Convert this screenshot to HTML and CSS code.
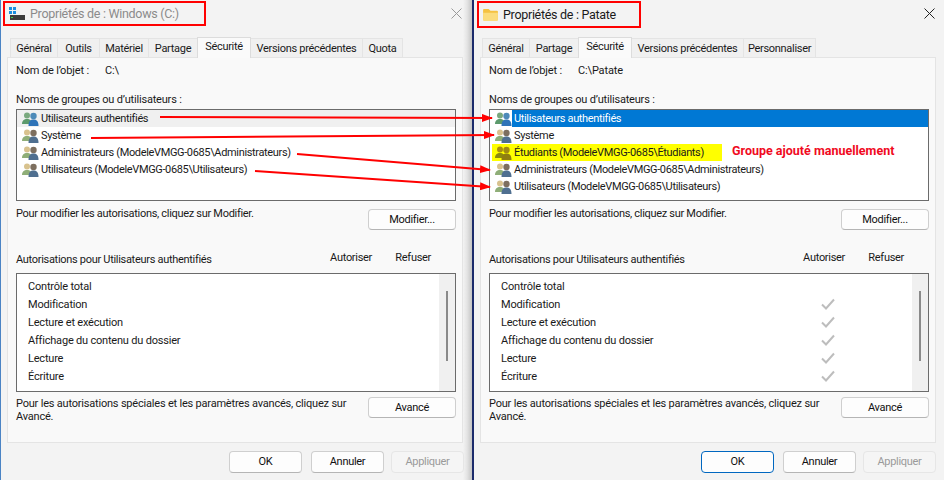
FILE: index.html
```html
<!DOCTYPE html>
<html lang="fr">
<head>
<meta charset="utf-8">
<title>Propriétés</title>
<link rel="stylesheet" href="styles.css">
</head>
<body>
<svg class="defs" width="0" height="0" aria-hidden="true">
  <defs>
    <symbol id="users" viewBox="0 0 17 14">
      <circle cx="5" cy="3.500" r="3" class="back"/>
      <path d="M0 12c0-3.500 2-5 5-5s5 1.500 5 5z" class="backb"/>
      <circle cx="11.500" cy="4" r="3.200" class="front"/>
      <path d="M6.500 14c0-5 2-6.500 5-6.500s5 1.500 5 6.500z" class="frontb"/>
    </symbol>
    <symbol id="check" viewBox="0 0 14 12">
      <path d="M1 6.500l4 4L13 1.500" fill="none" stroke="#bdbdbd" stroke-width="2"/>
    </symbol>
    <marker id="head" markerWidth="11" markerHeight="8" refX="10" refY="4" orient="auto" markerUnits="userSpaceOnUse">
      <path d="M0 0L11 4L0 8z" fill="#f00"/>
    </marker>
  </defs>
</svg>

<main class="desk">
  <section class="win win-inactive">
    <header class="titlebar">
      <div class="title-box title-box-a">
        <svg class="drive" viewBox="0 0 16 14" width="16" height="14"><rect x="0" y="0" width="3" height="3" fill="#1b8fe0"/><rect x="4" y="0" width="3" height="3" fill="#1b8fe0"/><rect x="0" y="4" width="3" height="3" fill="#1b8fe0"/><rect x="4" y="4" width="3" height="3" fill="#1b8fe0"/><rect x="1" y="8" width="15" height="5" fill="#3c3c3c"/><rect x="2" y="10" width="2" height="1" fill="#3fd04f"/></svg>
        <span class="title-text">Propriétés de : Windows (C:)</span>
      </div>
      <svg class="close" viewBox="0 0 11 11" width="11" height="11"><path d="M.5.500l10 10M10.500.500l-10 10" stroke="currentColor" fill="none"/></svg>
    </header>
    <nav class="tabs">
      <span class="tab t-gen">Général</span><span class="tab t-out">Outils</span><span class="tab t-mat">Matériel</span><span class="tab t-par">Partage</span><span class="tab tab-on t-sec">Sécurité</span><span class="tab t-ver">Versions précédentes</span><span class="tab t-quo">Quota</span>
    </nav>
    <div class="panel">
      <div class="objet"><span class="objet-label">Nom de l’objet :</span><span>C:\</span></div>
      <div class="groups-label">Noms de groupes ou d’utilisateurs :</div>
      <ul class="list">
        <li class="row row-hover"><svg class="ic ic-auth"><use href="#users"/></svg><span>Utilisateurs authentifiés</span></li>
        <li class="row"><svg class="ic ic-sys"><use href="#users"/></svg><span>Système</span></li>
        <li class="row"><svg class="ic ic-sys"><use href="#users"/></svg><span>Administrateurs (ModeleVMGG-0685\Administrateurs)</span></li>
        <li class="row"><svg class="ic ic-sys"><use href="#users"/></svg><span>Utilisateurs (ModeleVMGG-0685\Utilisateurs)</span></li>
      </ul>
      <div class="modify"><span class="modify-text">Pour modifier les autorisations, cliquez sur Modifier.</span><button class="btn btn-side btn-mod">Modifier...</button></div>
      <div class="perm-head"><span class="perm-title">Autorisations pour Utilisateurs authentifiés</span><span class="perm-col perm-col-a">Autoriser</span><span class="perm-col perm-col-r">Refuser</span></div>
      <div class="perm">
        <ul class="perm-list">
          <li>Contrôle total</li>
          <li>Modification</li>
          <li>Lecture et exécution</li>
          <li>Affichage du contenu du dossier</li>
          <li>Lecture</li>
          <li>Écriture</li>
        </ul>
        <div class="scroll"><i class="thumb"></i></div>
      </div>
      <div class="advanced"><p class="adv-text">Pour les autorisations spéciales et les paramètres avancés, cliquez sur Avancé.</p><button class="btn btn-side">Avancé</button></div>
    </div>
    <footer class="foot"><button class="btn btn-foot">OK</button><button class="btn btn-foot">Annuler</button><button class="btn btn-foot btn-off">Appliquer</button></footer>
  </section>

  <section class="win win-active">
    <header class="titlebar">
      <div class="title-box title-box-b">
        <svg class="folder" viewBox="0 0 16 14" width="15" height="13"><path d="M0 2a1 1 0 0 1 1-1h5l2 2h7a1 1 0 0 1 1 1v9H0z" fill="#f5c242"/><path d="M0 5h16v8a1 1 0 0 1-1 1H1a1 1 0 0 1-1-1z" fill="#fbdc7c"/></svg>
        <span class="title-text">Propriétés de : Patate</span>
      </div>
      <svg class="close" viewBox="0 0 11 11" width="11" height="11"><path d="M.5.500l10 10M10.500.500l-10 10" stroke="currentColor" fill="none"/></svg>
    </header>
    <nav class="tabs">
      <span class="tab t-gen">Général</span><span class="tab t-par">Partage</span><span class="tab tab-on t-sec">Sécurité</span><span class="tab t-ver">Versions précédentes</span><span class="tab t-per">Personnaliser</span>
    </nav>
    <div class="panel">
      <div class="objet"><span class="objet-label">Nom de l’objet :</span><span>C:\Patate</span></div>
      <div class="groups-label">Noms de groupes ou d’utilisateurs :</div>
      <ul class="list">
        <li class="row"><svg class="ic ic-auth"><use href="#users"/></svg><span class="sel">Utilisateurs authentifiés</span></li>
        <li class="row"><svg class="ic ic-sys"><use href="#users"/></svg><span>Système</span></li>
        <li class="row row-added"><svg class="ic ic-stu"><use href="#users"/></svg><span class="hl">Étudiants (ModeleVMGG-0685\Étudiants)</span><b class="note">Groupe ajouté manuellement</b></li>
        <li class="row"><svg class="ic ic-sys"><use href="#users"/></svg><span>Administrateurs (ModeleVMGG-0685\Administrateurs)</span></li>
        <li class="row"><svg class="ic ic-sys"><use href="#users"/></svg><span>Utilisateurs (ModeleVMGG-0685\Utilisateurs)</span></li>
      </ul>
      <div class="modify"><span class="modify-text">Pour modifier les autorisations, cliquez sur Modifier.</span><button class="btn btn-side btn-mod">Modifier...</button></div>
      <div class="perm-head"><span class="perm-title">Autorisations pour Utilisateurs authentifiés</span><span class="perm-col perm-col-a">Autoriser</span><span class="perm-col perm-col-r">Refuser</span></div>
      <div class="perm">
        <ul class="perm-list">
          <li>Contrôle total</li>
          <li>Modification<svg class="chk"><use href="#check"/></svg></li>
          <li>Lecture et exécution<svg class="chk"><use href="#check"/></svg></li>
          <li>Affichage du contenu du dossier<svg class="chk"><use href="#check"/></svg></li>
          <li>Lecture<svg class="chk"><use href="#check"/></svg></li>
          <li>Écriture<svg class="chk"><use href="#check"/></svg></li>
        </ul>
        <div class="scroll"><i class="thumb"></i></div>
      </div>
      <div class="advanced"><p class="adv-text">Pour les autorisations spéciales et les paramètres avancés, cliquez sur Avancé.</p><button class="btn btn-side">Avancé</button></div>
    </div>
    <footer class="foot"><button class="btn btn-foot btn-default">OK</button><button class="btn btn-foot">Annuler</button><button class="btn btn-foot btn-off">Appliquer</button></footer>
  </section>

  <svg class="arrows" viewBox="0 0 944 480" width="944" height="480" aria-hidden="true">
    <path d="M160 117L492 118" marker-end="url(#head)"/>
    <path d="M91 138L494 135" marker-end="url(#head)"/>
    <path d="M297 154L490 170" marker-end="url(#head)"/>
    <path d="M255 171L490 187" marker-end="url(#head)"/>
  </svg>
</main>
</body>
</html>
```
FILE: styles.css
```css
* { box-sizing: border-box; }
html, body { margin: 0; padding: 0; }
body { font-family: Roboto, "Liberation Sans", sans-serif; font-size: 11px; letter-spacing: -0.3px; color: #1a1a1a; background: #f0f0f0; overflow: hidden; }
.defs { position: absolute; }
ul { list-style: none; margin: 0; padding: 0; }
p { margin: 0; }

.desk { position: relative; display: flex; width: 944px; height: 480px; }
.win { display: flex; flex-direction: column; height: 480px; background: #f3f3f3; }
.win-inactive { width: 472px; padding-left: 6px; padding-right: 9px; border-left: 1px solid #4a83c4; background: linear-gradient(to left, #c4c4c4 0, #e4e4e4 5px, #f3f3f3 9px); }
.win-active { width: 472px; padding-left: 6px; padding-right: 8px; border-left: 2px solid #1b2a6b; }

.titlebar { display: flex; align-items: flex-start; justify-content: space-between; height: 37px; }
.title-box { display: flex; align-items: center; gap: 5px; margin-top: 1px; border: 2px solid #f00; font-size: 12.500px; letter-spacing: -0.3px; white-space: nowrap; }
.title-box-a { width: 203px; height: 25px; margin-left: -4px; padding-left: 4px; color: #8b8b8b; }
.title-box-b { width: 164px; height: 27px; margin-left: -3px; padding-left: 4px; }
.close { margin: 8px 1px 0 0; color: #222; }
.win-inactive .close { color: #999; }

.tabs { display: flex; align-items: flex-end; height: 20px; padding-left: 2px; position: relative; z-index: 1; white-space: nowrap; }
.win-inactive .tabs { padding-left: 3px; }
.tab { display: block; flex: none; height: 19px; line-height: 20px; text-align: center; background: #f0f0f0; border: 1px solid #e4e4e4; border-bottom: 0; margin-right: -1px; }
.tab-on { height: 21px; line-height: 18px; background: #fafafa; border-color: #dcdcdc; margin-bottom: -1px; z-index: 2; }
.t-gen { width: 48px; }
.t-out { width: 43px; }
.t-mat { width: 50px; }
.t-par { width: 50px; }
.t-sec { width: 54px; }
.t-ver { width: 113px; }
.t-quo { width: 41px; }
.t-per { width: 73px; }

.panel { height: 386px; background: #f9f9f9; border: 1px solid #e4e4e4; padding: 5px 6px 0 8px; }
.objet { display: flex; height: 16px; line-height: 16px; letter-spacing: -0.15px; }
.objet-label { width: 89px; }
.groups-label { margin-top: 13px; height: 16px; line-height: 16px; letter-spacing: -0.2px; }
.list { height: 92px; margin-top: 1px; background: #fff; border: 1px solid #6b6b6b; }
.row { display: flex; align-items: center; height: 17px; letter-spacing: -0.35px; }
.row span { padding: 0 2px 0 1px; line-height: 17px; }
.row-hover { background: #f0f0f0; }
.ic { width: 17px; height: 14px; margin: 0 1px 0 5px; flex: none; }
.ic-auth { --b: #7aa97e; --bb: #5c9a6c; --f: #4d8ab8; --fb: #2f74b8; }
.ic-sys { --b: #d8c28e; --bb: #8fae78; --f: #7d6f5f; --fb: #4f6f90; }
.ic-stu { --b: #a88f12; --bb: #8c8a10; --f: #a08a14; --fb: #8f7e10; }
.back { fill: var(--b); }
.backb { fill: var(--bb); }
.front { fill: var(--f); }
.frontb { fill: var(--fb); }
.sel { flex: 1; background: #0078d4; color: #fff; padding-left: 2px !important; margin-left: -1px; }
.row-added { position: relative; }
.hl { background: #ff0; }
.row-added .hl { width: 209px; box-shadow: -21px 0 0 #ff0; }
.row-added .ic { position: relative; z-index: 1; }
.note { color: #f00a1e; margin: -4px 0 0 10px; font-size: 12.500px; letter-spacing: 0; font-weight: 700; }

.modify { display: flex; justify-content: space-between; align-items: flex-start; margin-top: 5px; }
.modify-text { margin-top: 1px; line-height: 14px; }
.btn { font: inherit; letter-spacing: inherit; color: #111; height: 21px; background: #fdfdfd; border: 1px solid #cfcfcf; border-bottom-color: #b5b5b5; border-radius: 4px; padding: 0; }
.btn-side { width: 88px; margin-top: 1px; }
.btn-mod { margin-top: 3px; }
.btn-foot { width: 73px; height: 22px; margin-left: 9px; }
.btn-off { background: #f5f5f5; color: #9a9a9a; border-color: #e6e6e6; margin-left: 7px; }
.btn-default { border: 1px solid #0067c0; }

.perm-head { display: flex; align-items: flex-start; height: 36px; margin-top: 20px; }
.perm-title { flex: 1; padding-top: 3px; }
.perm-col { text-align: right; padding-top: 1px; }
.perm-col-a { width: 60px; }
.perm-col-r { width: 84px; padding-right: 25px; }
.perm { display: flex; height: 119px; margin-top: -13px; background: #fff; border: 1px solid #6b6b6b; }
.perm-list { flex: 1; padding-top: 4px; letter-spacing: -0.2px; }
.perm-list li { display: flex; align-items: center; justify-content: space-between; height: 18px; line-height: 18px; padding-left: 11px; padding-right: 92px; position: relative; }
.chk { position: absolute; left: 331px; top: 2px; width: 14px; height: 12px; }
.scroll { width: 16px; background: #f0f0f0; position: relative; display: flex; justify-content: center; padding-top: 17px; }
.thumb { display: block; width: 2px; height: 70px; background: #8a8a8a; }

.advanced { display: flex; justify-content: space-between; align-items: flex-start; margin-top: 4px; }
.adv-text { width: 340px; line-height: 13px; padding-top: 1px; letter-spacing: -0.2px; }

.foot { display: flex; justify-content: flex-end; align-items: center; flex: 1; }
.win-inactive .foot { margin-right: -1px; }

.arrows { position: absolute; left: 0; top: 0; pointer-events: none; }
.arrows path { stroke: #f00; stroke-width: 2; fill: none; }
```
